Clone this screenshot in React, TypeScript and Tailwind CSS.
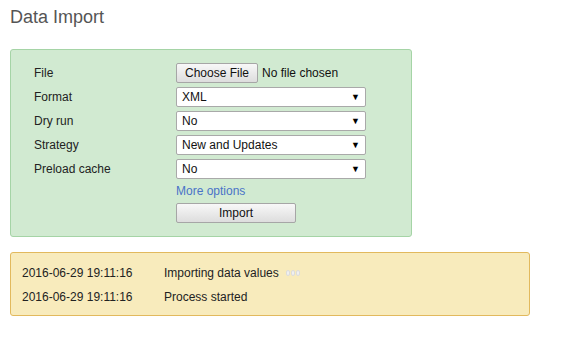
import React from "react";

const font = { fontFamily: '"Liberation Sans", Arial, sans-serif' };

function Select({ value }: { value: string }) {
  return (
    <div className="flex h-5 w-[190px] items-center justify-between rounded-[2px] border border-[#a9a9a9] bg-white pl-[5px] pr-[5px] text-[12px] text-[#111]">
      <span>{value}</span>
      <span className="text-[9px] leading-none text-black">▼</span>
    </div>
  );
}

function Row({ label, children }: { label: string; children: React.ReactNode }) {
  return (
    <div className="flex h-6 items-center">
      <div className="w-[142px] text-[12px] text-[#222]">{label}</div>
      {children}
    </div>
  );
}

export default function App() {
  return (
    <div style={font} className="min-h-[341px] w-[578px] bg-white px-[10px] pt-[6px]">
      <h1 className="text-[18px] leading-[22px] text-[#555]">Data Import</h1>

      <div className="mt-[21px] w-[402px] rounded-[3px] border border-[#a5d4a6] bg-[#d1ead1] pb-[13px] pl-[23px] pt-[11px]">
        <Row label="File">
          <div className="flex items-center gap-[4px]">
            <button
              type="button"
              className="h-5 rounded-[2px] border border-[#a6a6a6] bg-gradient-to-b from-[#f8f8f8] to-[#dddddd] px-[8px] text-[12px] leading-none text-[#111]"
            >
              Choose File
            </button>
            <span className="text-[12px] text-[#111]">No file chosen</span>
          </div>
        </Row>
        <Row label="Format">
          <Select value="XML" />
        </Row>
        <Row label="Dry run">
          <Select value="No" />
        </Row>
        <Row label="Strategy">
          <Select value="New and Updates" />
        </Row>
        <Row label="Preload cache">
          <Select value="No" />
        </Row>
        <div className="flex h-[18px] items-center pl-[142px] pt-[1px]">
          <a className="text-[12px] text-[#4a73c8]">More options</a>
        </div>
        <div className="flex pl-[142px] pt-[4px]">
          <button
            type="button"
            className="h-5 w-[120px] rounded-[2px] border border-[#a6a6a6] bg-gradient-to-b from-[#f8f8f8] to-[#dddddd] text-[12px] leading-none text-[#111]"
          >
            Import
          </button>
        </div>
      </div>

      <div className="mt-[15px] w-[520px] rounded-[3px] border border-[#e2b95d] bg-[#f8ebbc] pb-[6px] pl-[11px] pt-[8px] text-[12px] text-[#222]">
        <div className="flex h-6 items-center">
          <span className="w-[142px]">2016-06-29 19:11:16</span>
          <span>Importing data values</span>
          <span className="ml-[7px] flex gap-[1px]">
            <span className="h-[6px] w-[4px] rounded-[2px] border border-[#dcdcdc] bg-[#f0f0f0]" />
            <span className="h-[6px] w-[4px] rounded-[2px] border border-[#dcdcdc] bg-[#f0f0f0]" />
            <span className="h-[6px] w-[4px] rounded-[2px] border border-[#dcdcdc] bg-[#f0f0f0]" />
          </span>
        </div>
        <div className="flex h-6 items-center">
          <span className="w-[142px]">2016-06-29 19:11:16</span>
          <span>Process started</span>
        </div>
      </div>
    </div>
  );
}
